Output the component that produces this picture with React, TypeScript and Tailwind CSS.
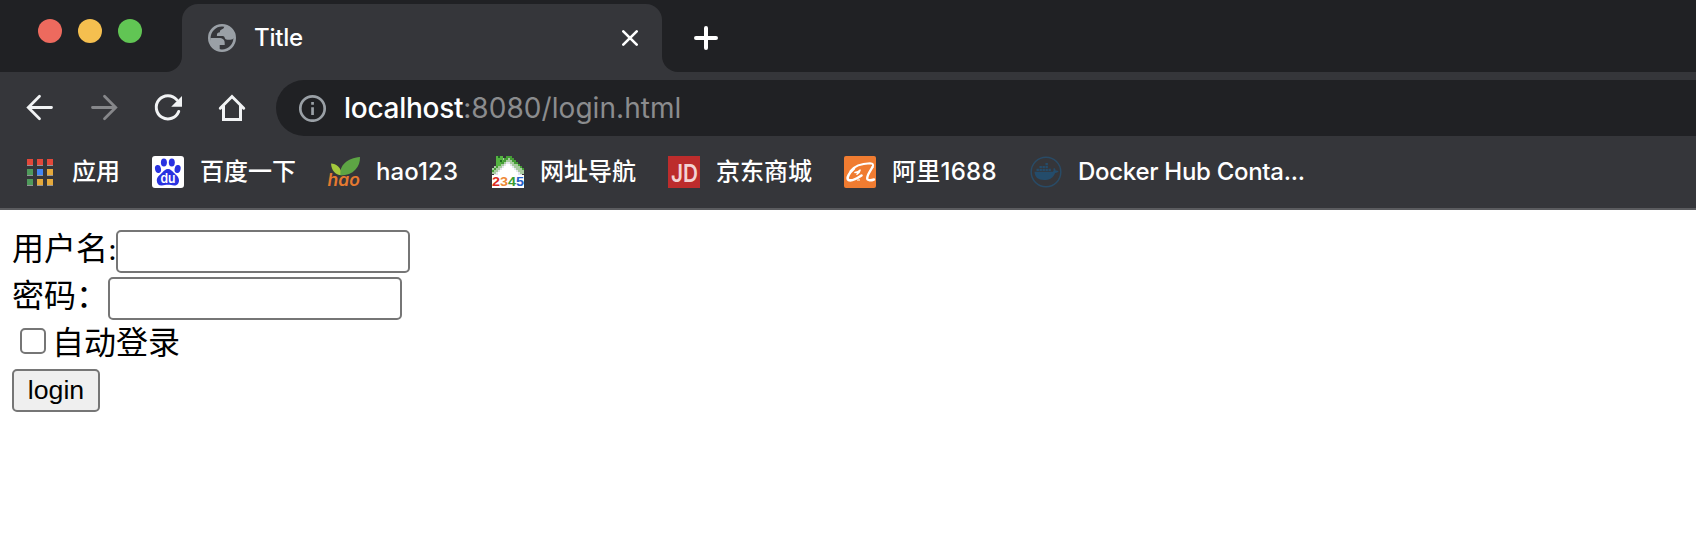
import React from 'react';

const GlobeIcon = () => (
  <svg className="h-7 w-7 shrink-0" viewBox="0 0 28 28" fill="none">
    <circle cx="14" cy="14" r="12.700" stroke="#9aa0a6" strokeWidth="2.600" />
    <path
      d="M2.500 14h8.500c3.600 0 5.700 1.800 5.700 5v2h-5v3.500c0 1 .6 1.400 1.600 1.800C7 26.500 1.500 21 2.500 14z"
      fill="#9aa0a6"
    />
    <path
      d="M16.200 2.200c0 2-1.200 2.600-3 3.500-1.200.6-1.300 1.300-1.300 2.600-1.800 0-3 .8-3 2.600v1h5.800c1.300 0 1.800.8 2.100 2.200.3 1.200 1.200 1.700 2.400 1.700h3c1.800 0 3-.8 4-2C26 7.500 22 3 16.200 2.200z"
      fill="#9aa0a6"
    />
  </svg>
);

const AppsIcon = () => {
  const cells = ['#e2483a', '#e2483a', '#e2483a', '#4f9a5b', '#4285f4', '#e5a93c', '#4f9a5b', '#e5a93c', '#e5a93c'];
  return (
    <svg className="h-[27px] w-[26px] shrink-0" viewBox="0 0 26 27" shapeRendering="crispEdges">
      {cells.map((c, i) => (
        <g key={i}>
          <rect x={(i % 3) * 10} y={Math.floor(i / 3) * 10} width="6" height="7" fill="#939496" />
          <rect x={(i % 3) * 10} y={Math.floor(i / 3) * 10} width="6" height="6" fill={c} />
        </g>
      ))}
    </svg>
  );
};

const BaiduIcon = () => (
  <svg className="h-8 w-8 shrink-0" viewBox="0 0 32 32">
    <rect width="32" height="32" rx="3" fill="#fff" />
    <g fill="#2932e1">
      <ellipse cx="11.900" cy="6.600" rx="3" ry="4" />
      <ellipse cx="19.800" cy="6.600" rx="3" ry="4" />
      <ellipse cx="6" cy="13" rx="3" ry="4" transform="rotate(-12 6 13)" />
      <ellipse cx="25.600" cy="13" rx="3" ry="4" transform="rotate(12 25.600 13)" />
      <path d="M16 13c2.600 0 3.900 1.800 5.800 3.700 2.300 2.300 5.200 4 5.200 7.700 0 3-2 5-4.900 5-2.300 0-3.700-.6-6.100-.6s-3.800.6-6.400.6c-2.900 0-4.800-2-4.800-5 0-3.700 3.100-5.400 5.300-7.700C12 14.800 13.400 13 16 13z" />
    </g>
    <text x="8.500" y="26.800" fontFamily="Inter, sans-serif" fontSize="13" fontWeight="600" fill="#fff" textLength="15" lengthAdjust="spacingAndGlyphs">du</text>
  </svg>
);

const HaoIcon = () => (
  <svg className="h-8 w-8 shrink-0 overflow-visible" viewBox="0 0 32 32">
    <path d="M3 7.500c5.500.2 10 3.800 11 11.600C7.500 19.500 3.500 14.500 3 7.500z" fill="#a4c93d" />
    <path d="M12.500 19.500C11 9.500 19 2 32 1c.4 9.500-6.500 18.500-19.500 18.500z" fill="#5da544" />
    <text x="-.5" y="29.600" fontFamily="Inter, sans-serif" fontSize="17" fontStyle="italic" fontWeight="600" fill="#e57a30" textLength="32.500" lengthAdjust="spacingAndGlyphs">hao</text>
  </svg>
);

const House2345Icon = () => (
  <svg className="h-8 w-8 shrink-0" viewBox="0 0 32 32">
    <g shapeRendering="crispEdges">
      <path d="M14 0h6v2h2v2h2v2h2v2h2v2h2v2h2v6h-2v2H2v-2H0v-6h2v-2h2V8h2V6h2V4h2V2h4z" fill="#a9cba1" />
      <path d="M14 0h6v2h2v2h2v2h2v2h2v2h2v2h2v2h-2v-2h-2v-2h-2v-2h-2V8h-2V6h-2V4h-2V2h-2v2h-2v2h-2v2H8v2H6v2H4v2H2v2H0v-2h2v-2h2v-2h2V8h2V6h2V4h2V2h2z" fill="#459d36" />
      <path d="M16 6h2v2h2v2h2v2h2v2h2v2h2v2h2v2H2v-2h2v-2h2v-2h2v-2h2v-2h2V8h2V6z" fill="#e4e6ec" />
      <path d="M16 8h2v2h2v2h2v2h2v2h2v4H6v-4h2v-2h2v-2h2v-2h2V8z" fill="#fff" />
      <path d="M4 0h7v6H9v4H4z" fill="#55b441" />
      <path d="M8 4h2v2H8zM6 0h2v2H6z" fill="#1f6b22" />
      <rect y="19" width="32" height="13" fill="#fff" />
    </g>
    <g fontFamily="Liberation Sans, sans-serif" fontSize="13.500" fontWeight="700">
      <text x="0" y="30" fill="#dc2a20" textLength="8" lengthAdjust="spacingAndGlyphs">2</text>
      <text x="8" y="30" fill="#ee8936" textLength="8" lengthAdjust="spacingAndGlyphs">3</text>
      <text x="16" y="30" fill="#3b9b31" textLength="8" lengthAdjust="spacingAndGlyphs">4</text>
      <text x="24" y="30" fill="#2762c8" textLength="8" lengthAdjust="spacingAndGlyphs">5</text>
    </g>
  </svg>
);

const JdIcon = () => (
  <svg className="h-8 w-8 shrink-0 overflow-visible" viewBox="0 0 32 32">
    <rect width="32" height="32" fill="#bd2c2c" />
    <text x="3" y="25.800" fontFamily="Inter, sans-serif" fontSize="24.500" fontWeight="600" fill="#f3d3d3" textLength="27" lengthAdjust="spacingAndGlyphs">JD</text>
  </svg>
);

const AlibabaIcon = () => (
  <svg className="h-8 w-8 shrink-0" viewBox="0 0 32 32">
    <rect width="32" height="32" rx="2" fill="#f07c31" />
    <g fill="none" stroke="#fff" strokeLinecap="round" strokeLinejoin="round">
      <path d="M6.500 15C10 10.500 18 7.500 26 7.200c3 0 3.800 1.400 2.500 4" strokeWidth="2" />
      <path d="M10 12.500C5.500 16.500 2 22 4.500 24c2.500 1.200 8.500-1.500 13-4.500" strokeWidth="2.600" />
      <path d="M28.500 11c-2 4-5.500 8-5.300 11.500.2 2.400 4 2 6.800 1" strokeWidth="2.400" />
      <path d="M11 16.500c2-.2 4-1 5-2.300-.4 1.600-1.500 3-3 4" strokeWidth="1.600" />
    </g>
    <path d="M13 24h3" stroke="#f8c49e" strokeWidth="2" />
  </svg>
);

const DockerIcon = () => (
  <svg className="h-8 w-8 shrink-0" viewBox="0 0 32 32">
    <circle cx="16" cy="16" r="14.800" fill="none" stroke="#294b66" strokeWidth="1.500" />
    <g fill="#244c6b">
      <path d="M4.500 15.800h18.300c.8-.4 1-1.300.6-2.500-.1-.6.300-1.100.8-1.400.9.700 1.400 1.600 1.400 2.600 1.100-.2 2.200 0 3 .7-.8 1.200-2 1.700-3.500 1.700C23.300 21.800 19.300 24 14 24c-5.800 0-9.300-2.700-9.500-8.200z" />
      <path d="M6.500 12.700h2.400v2.400H6.500zM9.500 12.700h2.400v2.400H9.500zM12.500 12.700h2.400v2.400h-2.400zM15.500 12.700h2.400v2.400h-2.400zM18.500 12.700h2.400v2.400h-2.400zM9.500 9.900h2.400v2.200H9.500zM12.500 9.900h2.400v2.200h-2.400zM15.500 9.900h2.400v2.200h-2.400zM15.500 7.100h2.400v2.200h-2.400z" />
    </g>
  </svg>
);

const Bookmark = ({ icon, label, className }: { icon: React.ReactNode; label: string; className: string }) => (
  <div className={`flex shrink-0 items-center whitespace-nowrap ${className}`}>
    {icon}
    <span>{label}</span>
  </div>
);

function TabStrip() {
  return (
    <div className="flex h-[72px] bg-[#35363a]">
      <div className="flex w-[182px] shrink-0 gap-4 rounded-br-2xl bg-[#202124] pt-[19px] pl-[38px]">
        <span className="h-6 w-6 rounded-full bg-[#ed6a5e]" />
        <span className="h-6 w-6 rounded-full bg-[#f5bf4f]" />
        <span className="h-6 w-6 rounded-full bg-[#61c554]" />
      </div>
      <div className="w-[480px] shrink-0 bg-[#202124] pt-1">
        <div className="flex h-[68px] items-start rounded-t-2xl bg-[#35363a] pt-5 pr-6 pl-[26px]">
          <GlobeIcon />
          <span className="ml-[18px] flex-1 text-[24px] leading-7 font-medium tracking-[-0.25px] text-white">Title</span>
          <svg className="h-7 w-4 shrink-0" viewBox="0 0 16 28" stroke="#fff" strokeWidth="2.600" strokeLinecap="round">
            <path d="M1.300 7.300l13.400 13.400M14.700 7.300L1.300 20.700" />
          </svg>
        </div>
      </div>
      <div className="flex-1 rounded-bl-2xl bg-[#202124] pt-[26px] pl-8">
        <svg className="h-6 w-6" viewBox="0 0 24 24" stroke="#fff" strokeWidth="4" strokeLinecap="round">
          <path d="M12 2v20M2 12h20" />
        </svg>
      </div>
    </div>
  );
}

function Toolbar() {
  return (
    <div className="flex h-[72px] items-start bg-[#35363a] pt-2">
      <div className="flex w-[276px] shrink-0 pt-[11px] pl-6">
        <svg className="h-8 w-8" viewBox="0 0 32 32" fill="none" stroke="#f1f3f4" strokeWidth="2.800" strokeLinecap="round">
          <path d="M27.500 16.500H4.500M15.500 5.300L4.300 16.500l11.200 11.200" />
        </svg>
        <svg className="ml-8 h-8 w-8" viewBox="0 0 32 32" fill="none" stroke="#86878a" strokeWidth="2.800" strokeLinecap="round">
          <path d="M4.500 16.500h23M16.500 5.300l11.200 11.200-11.200 11.200" />
        </svg>
        <svg className="ml-8 h-8 w-8" viewBox="0 0 32 32" fill="none">
          <path d="M26.700 20.500A11.600 11.600 0 1 1 24.800 8.900" stroke="#f1f3f4" strokeWidth="3" strokeLinecap="round" />
          <path d="M30 5v10.800H19.200z" fill="#f1f3f4" />
        </svg>
        <svg className="ml-8 h-8 w-8" viewBox="0 0 32 32" fill="none" stroke="#f1f3f4" strokeWidth="3" strokeLinecap="round">
          <path d="M4.300 17.200L16 5.500l11.700 11.700M7.500 15v13.500h17V15" />
        </svg>
      </div>
      <div className="flex h-14 flex-1 items-center rounded-l-full bg-[#202124] pl-[23px]">
        <svg className="h-7 w-7 shrink-0" viewBox="0 0 28 28" fill="none">
          <circle cx="13.500" cy="14.500" r="12.200" stroke="#9aa0a6" strokeWidth="2.700" />
          <path d="M12.200 13.200h2.700V21h-2.700zM12.200 8h2.700v2.800h-2.700z" fill="#9aa0a6" />
        </svg>
        <span className="ml-[17px] text-[28px] leading-9 tracking-[0.06px] text-[#8b8c8e]">
          <span className="font-medium tracking-[-0.28px] text-white">localhost</span>:8080/login.html
        </span>
      </div>
    </div>
  );
}

function BookmarksBar() {
  return (
    <div className="flex h-[66px] items-center border-b-2 border-[#5b5c5f] bg-[#35363a] pb-2 pl-[27px] text-[24px] font-medium text-white">
      <Bookmark icon={<AppsIcon />} label="应用" className="w-[125px] gap-[19px]" />
      <Bookmark icon={<BaiduIcon />} label="百度一下" className="w-[176px] gap-4" />
      <Bookmark icon={<HaoIcon />} label="hao123" className="w-[164px] gap-4 tracking-[0.1px]" />
      <Bookmark icon={<House2345Icon />} label="网址导航" className="w-[176px] gap-4" />
      <Bookmark icon={<JdIcon />} label="京东商城" className="w-[176px] gap-4" />
      <Bookmark icon={<AlibabaIcon />} label="阿里1688" className="w-[186px] gap-4 tracking-[0.25px]" />
      <Bookmark icon={<DockerIcon />} label="Docker Hub Conta..." className="gap-4 tracking-[-0.29px]" />
    </div>
  );
}

function LoginForm() {
  return (
    <form
      className="flex flex-col items-start pt-5 pl-3 font-['Liberation_Serif','Noto_Sans_CJK_SC',serif] text-[32px] leading-[43px] text-black"
      onSubmit={(e) => e.preventDefault()}
    >
      <div className="flex h-[47px] items-start">
        <label htmlFor="username" className="-mt-0.5 w-[104px] whitespace-nowrap">用户名:</label>
        <input id="username" className="h-[43px] w-[294px] rounded-[5px] border-2 border-[#767676] bg-white px-1 text-[27px]" />
      </div>
      <div className="flex h-[47px] items-start">
        <label htmlFor="password" className="-mt-0.5 w-24 whitespace-nowrap">密码：</label>
        <input id="password" type="password" className="h-[43px] w-[294px] rounded-[5px] border-2 border-[#767676] bg-white px-1 text-[27px]" />
      </div>
      <div className="flex h-[45px] items-start pl-2">
        <input id="auto" type="checkbox" className="mt-1 mr-1.5 h-[26px] w-[26px] appearance-none rounded-[5px] border-2 border-[#767676] bg-white" />
        <label htmlFor="auto" className="-mt-0.5">自动登录</label>
      </div>
      <button className="h-[43px] w-[88px] rounded-[5px] border-2 border-[#767676] bg-[#efefef] pb-0.5 font-['Liberation_Sans',sans-serif] text-[26.700px] leading-9">
        login
      </button>
    </form>
  );
}

export default function App() {
  return (
    <div className="h-[534px] w-full overflow-hidden bg-white font-['Inter','Noto_Sans_CJK_SC',sans-serif]">
      <TabStrip />
      <Toolbar />
      <BookmarksBar />
      <LoginForm />
    </div>
  );
}
